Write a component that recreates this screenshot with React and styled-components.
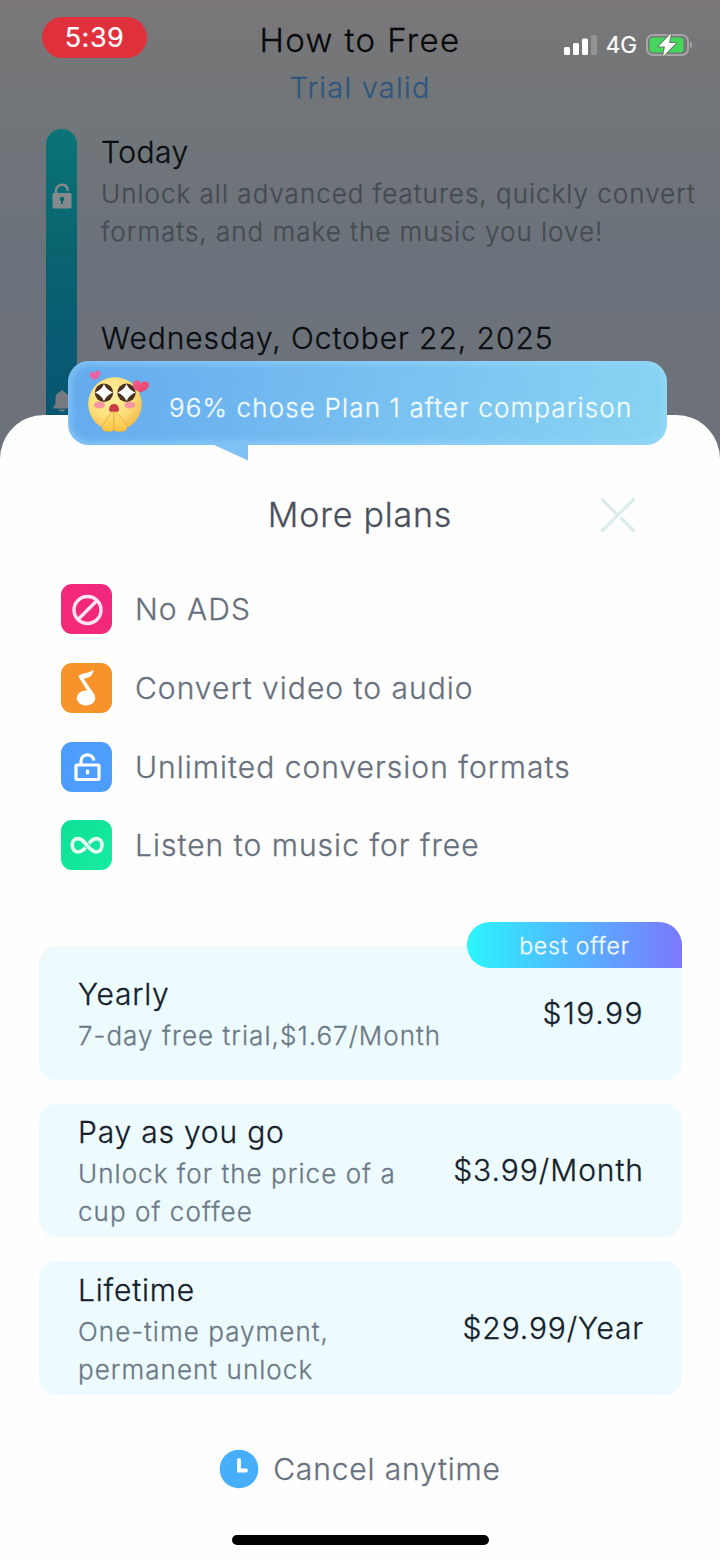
import React from 'react';
import styled, {createGlobalStyle} from 'styled-components';

const GlobalStyle = createGlobalStyle`
    * {
        box-sizing: border-box;
    }

    body {
        margin: 0;
        font-family: Inter, "Liberation Sans", sans-serif;
        font-weight: 300;
    }
`;

const Screen = styled.div`
    position: relative;
    width: 720px;
    height: 1560px;
    overflow: hidden;
    background: linear-gradient(180deg, #7a7678 0, #747678 70px, #6f7579 150px, #6c727b 260px, #6d7279 480px);
`;

const Text = styled.div`
    font-size: ${props => props.$size}px;
    line-height: ${props => props.$line || 40}px;
    letter-spacing: ${props => props.$spacing}px;
    color: ${props => props.$color};
    -webkit-text-stroke: 0.3px currentColor;
    white-space: pre;
`;

const StatusBar = styled.div`
    position: absolute;
    top: 0;
    left: 0;
    right: 0;
    display: flex;
    justify-content: space-between;
    padding: 17px 27px 0 42px;
`;

const Clock = styled.div`
    width: 105px;
    height: 41px;
    border-radius: 21px;
    background: #e0303c;
    color: #fff;
    font-size: 27px;
    font-weight: 400;
    letter-spacing: 0.5px;
    line-height: 42px;
    text-align: center;
    -webkit-text-stroke: 0.2px currentColor;
`;

const StatusIcons = styled.div`
    display: flex;
    align-items: center;
    height: 55px;
`;

const Network = styled.span`
    margin: 0 9px;
    color: #fff;
    font-size: 22.5px;
    font-weight: 400;
    -webkit-text-stroke: 0.2px currentColor;
`;

const Header = styled.header`
    display: flex;
    flex-direction: column;
    align-items: center;
    gap: 7px;
    height: 129px;
    padding-top: 20px;
`;

const Timeline = styled.div`
    display: flex;
    gap: 24px;
    padding-left: 46px;
`;

const TimelineBar = styled.div`
    display: flex;
    flex-direction: column;
    align-items: center;
    justify-content: space-between;
    width: 31px;
    height: 310px;
    padding: 53px 0 26px;
    border-radius: 16px 16px 0 0;
    background: linear-gradient(180deg, #0a7478 0, #09646f 120px, #085a72 220px, #08546f 310px);
`;

const TimelineContent = styled.div`
    display: flex;
    flex-direction: column;
    padding-top: 1px;
`;

const TimelineItem = styled.div`
    height: 187.5px;
`;

const Sheet = styled.section`
    position: absolute;
    top: 415px;
    left: 0;
    right: 0;
    bottom: 0;
    display: flex;
    flex-direction: column;
    border-radius: 44px 44px 0 0;
    background: #fefefe;
`;

const Bubble = styled.div`
    position: absolute;
    top: -54px;
    left: 68px;
    display: flex;
    align-items: center;
    width: 599px;
    height: 84px;
    padding-left: 17px;
    border-radius: 21px;
    background: linear-gradient(100deg, #63abee 0, #72b9f0 35%, #80caf2 75%, #88d4f2 100%);
    box-shadow: inset 0 0 9px 2px rgba(165, 218, 255, 0.65);
`;

const BubbleTail = styled.svg`
    position: absolute;
    top: 82px;
    left: 142px;
`;

const BubbleText = styled(Text)`
    margin: 10px 0 0 18px;
`;

const SheetHeader = styled.div`
    display: grid;
    grid-template-columns: 1fr auto 1fr;
    align-items: center;
    padding: 80px 0 0;
`;

const CloseIcon = styled.svg`
    grid-column: 3;
    justify-self: end;
    margin-right: 84px;
`;

const SheetTitle = styled(Text)`
    grid-column: 2;
`;

const Features = styled.div`
    display: flex;
    flex-direction: column;
    gap: 28.75px;
    padding: 49.1px 0 0 61px;
`;

const Feature = styled.div`
    display: flex;
    align-items: center;
    gap: 23px;
`;

const FeatureIcon = styled.svg`
    width: 51px;
    height: 50px;
    border-radius: 11px;
    background: ${props => props.$background};
`;

const Plans = styled.div`
    display: flex;
    flex-direction: column;
    gap: 24px;
    padding: 75.7px 38px 0 39px;
`;

const Plan = styled.div`
    position: relative;
    display: flex;
    align-items: center;
    justify-content: space-between;
    height: 133.6px;
    padding: 0 38px 0 39px;
    border-radius: 18px;
    background: #edfbff;
`;

const PlanInfo = styled.div`
    padding-top: 3px;
`;

const PlanTitle = styled(Text)`
    margin-bottom: 3px;
`;

const BestOffer = styled.div`
    position: absolute;
    top: -24px;
    right: 0;
    width: 215px;
    height: 46px;
    border-radius: 23px 23px 0 23px;
    background: linear-gradient(90deg, #2cf6fd 0, #48c6ff 35%, #629fff 68%, #7b79fc 100%);
    text-align: center;
`;

const Footer = styled.div`
    display: flex;
    align-items: center;
    justify-content: center;
    gap: 14px;
    margin-top: 54px;
`;

const HomeIndicator = styled.div`
    position: absolute;
    bottom: 15px;
    left: 232px;
    width: 257px;
    height: 10px;
    border-radius: 5px;
    background: #000;
`;

const SignalIcon = () => (
    <svg width="33" height="20" viewBox="0 0 33 20">
        <rect x="0" y="12" width="6" height="8" rx="1.6" fill="#fff"/>
        <rect x="9" y="8" width="6" height="12" rx="1.6" fill="#fff"/>
        <rect x="18" y="3.5" width="6" height="16.5" rx="1.6" fill="#fff"/>
        <rect x="27" y="0" width="6" height="20" rx="1.6" fill="#959394"/>
    </svg>
);

const BatteryIcon = () => (
    <svg width="47" height="24" viewBox="0 0 47 24">
        <rect x="1" y="2" width="41" height="20" rx="6" fill="none" stroke="#a5a5a5" strokeWidth="2"/>
        <rect x="3.5" y="4.5" width="34" height="15" rx="3.5" fill="#45d75c"/>
        <path d="M44 8.5C46.800 9.500 46.800 14.500 44 15.500Z" fill="#a5a5a5"/>
        <path d="M25 0.500L12.500 13.500H19L17 23.500L30 10H23Z" fill="#fff" stroke="#64806a" strokeWidth="2" paintOrder="stroke" strokeLinejoin="round"/>
    </svg>
);

const BarLockIcon = () => (
    <svg width="20" height="27" viewBox="0 0 20 27">
        <path d="M4 12V8A6 6 0 0 1 15.500 6.500V9" fill="none" stroke="#868a8d" strokeWidth="2.400"/>
        <rect x="0.500" y="11" width="19" height="15.500" rx="1.500" fill="#868a8d"/>
        <circle cx="10" cy="17" r="2.300" fill="#0a6772"/>
        <path d="M9 17H11V22H9Z" fill="#0a6772"/>
    </svg>
);

const BellIcon = () => (
    <svg width="20" height="23" viewBox="0 0 20 23">
        <path d="M8.500 1.500A1.500 1.500 0 0 1 11.500 1.500C15.500 3 16.500 6 16.500 9V14L19.500 18.500H0.500L3.500 14V9C3.500 6 4.500 3 8.500 1.500Z" fill="#777980"/>
        <path d="M6.500 19.500H13.500C13 22.300 7 22.300 6.500 19.500Z" fill="#777980"/>
    </svg>
);

const StarEyesEmoji = () => (
    <svg width="66" height="66" viewBox="0 0 66 66">
        <defs>
            <radialGradient id="face" cx="0.42" cy="0.35" r="0.7">
                <stop offset="0" stopColor="#fff0a6"/>
                <stop offset="0.6" stopColor="#fddf78"/>
                <stop offset="1" stopColor="#f2b347"/>
            </radialGradient>
            <linearGradient id="hands" x1="0" y1="0" x2="0" y2="1">
                <stop offset="0" stopColor="#ffe27c"/>
                <stop offset="1" stopColor="#f9c545"/>
            </linearGradient>
            <linearGradient id="heart" x1="0" y1="0" x2="1" y2="1">
                <stop offset="0" stopColor="#f5648e"/>
                <stop offset="1" stopColor="#e63c68"/>
            </linearGradient>
        </defs>
        <circle cx="30" cy="34" r="26.800" fill="url(#face)"/>
        <ellipse cx="14.500" cy="35" rx="5.500" ry="3.400" fill="#f796a0"/>
        <ellipse cx="45" cy="35" rx="5.500" ry="3.400" fill="#f796a0"/>
        <circle cx="19" cy="22.800" r="9.200" fill="#49301f"/>
        <circle cx="41.500" cy="22.800" r="9.200" fill="#49301f"/>
        <path d="M19 14Q21.500 20 28 22.500Q21.500 25 19 31Q16.500 25 10 22.500Q16.500 20 19 14Z" fill="#fff"/>
        <path d="M41.500 14Q44 20 50.500 22.500Q44 25 41.500 31Q39 25 32.500 22.500Q39 20 41.500 14Z" fill="#fff"/>
        <path d="M24 40C24 36 26.500 34 29 34C31.500 34 34 36 34 40C34 43 24 43 24 40Z" fill="#c93a44"/>
        <path d="M28 41.500C25 44 21 49 17.500 56C16 60 20 62 23 61C27 63 29 60 29 57V44Z" fill="url(#hands)" stroke="#eda93c" strokeWidth="0.800"/>
        <path d="M30 41.500C33 44 38 49 41.500 56C43 60 39 62 36 61C32 63 29 60 29 57V44Z" fill="url(#hands)" stroke="#eda93c" strokeWidth="0.800"/>
        <path d="M10 10C4 8 3 3 6.500 2C8 1.500 9 2.500 9.500 3.500C10 1.500 12 -0.500 14.500 1C17 3.500 14 8 10 10Z" fill="#e763a5"/>
        <path d="M56 22.500C47 20 46 13 50 10.800C52.500 9.500 55 11 55.500 13.500C57.500 10.500 63 10.500 64 14C64.500 18 60 21 56 22.500Z" fill="url(#heart)"/>
    </svg>
);

const ClockIcon = () => (
    <svg width="40" height="40" viewBox="0 0 40 40">
        <circle cx="20" cy="20" r="19.300" fill="#47affa"/>
        <path d="M20 11V21.500H27" fill="none" stroke="#fff" strokeWidth="3.800" strokeLinecap="round"/>
    </svg>
);

const features = [
    {
        title: 'No ADS',
        background: 'linear-gradient(45deg, #f52a76, #f0267e)',
        icon: <g fill="none" stroke="#ffe6f2" strokeWidth="3.400">
            <circle cx="26.500" cy="26" r="13.500"/>
            <path d="M17 35.500L36 16.500"/>
        </g>
    },
    {
        title: 'Convert video to audio',
        background: '#f7932a',
        icon: <g fill="#fff">
            <ellipse cx="25" cy="35" rx="9.300" ry="7.500"/>
            <path d="M17.500 13.500C20 9 29 11 32.500 6.500C32.500 13 27 15.500 22.500 15.500L33.500 31.500L30 34Z"/>
        </g>
    },
    {
        title: 'Unlimited conversion formats',
        background: '#4d9dfc',
        icon: <g fill="none" stroke="#fff" strokeWidth="3.200">
            <rect x="15" y="23" width="23" height="14.500" rx="0.800"/>
            <path d="M20 23V19.500C20 11 31.500 10.500 33 18.500"/>
            <rect x="24.800" y="27.500" width="3.500" height="5" rx="1.500" fill="#fff" stroke="none"/>
        </g>
    },
    {
        title: 'Listen to music for free',
        background: 'linear-gradient(135deg, #0fdf94, #16eda2)',
        icon: <path d="M28 23.500C30.500 20.500 32.500 18.700 35.500 18.700C39 18.700 41 21.500 41 25C41 28.500 39 32 35.500 32C32.500 32 31 30.500 28.500 28L23.500 22.500C21.500 20 19.500 18.700 17 18.700C13.500 18.700 11.200 21.500 11.200 25C11.200 28.500 13.500 32 17 32C20 32 22 30.500 24.500 27.500" fill="none" stroke="#e4fff3" strokeWidth="3.700"/>
    }
];

const plans = [
    {title: 'Yearly', detail: '7-day free trial,$1.67/Month', price: '$19.99', priceSpacing: 1.5, best: true},
    {title: 'Pay as you go', detail: 'Unlock for the price of a\ncup of coffee', price: '$3.99/Month', priceSpacing: 0.95},
    {title: 'Lifetime', detail: 'One-time payment,\npermanent unlock', price: '$29.99/Year', priceSpacing: 0.85}
];

const App = () => {
    let featureItems = features.map(feature => {
        return <Feature key={feature.title}>
            <FeatureIcon viewBox="0 0 51 50" $background={feature.background}>{feature.icon}</FeatureIcon>
            <Text $size={30} $spacing={1.02} $color="#68707d">{feature.title}</Text>
        </Feature>
    });
    let planItems = plans.map(plan => {
        return <Plan key={plan.title}>
            <PlanInfo>
                <PlanTitle $size={30} $spacing={0.8} $color="#14202a">{plan.title}</PlanTitle>
                <Text $size={26} $line={38.5} $spacing={1.05} $color="#6b7986">{plan.detail}</Text>
            </PlanInfo>
            <Text $size={30} $spacing={plan.priceSpacing} $color="#14202a">{plan.price}</Text>
            {plan.best && <BestOffer>
                <Text $size={23} $line={48} $spacing={0.85} $color="#f0fbff">best offer</Text>
            </BestOffer>}
        </Plan>
    });
    return (
        <Screen>
            <GlobalStyle/>
            <Header>
                <Text $size={33} $line={41} $spacing={1.4} $color="#08090b">How to Free</Text>
                <Text $size={29} $spacing={1.2} $color="#2e5680">Trial valid</Text>
            </Header>
            <Timeline>
                <TimelineBar>
                    <BarLockIcon/>
                    <BellIcon/>
                </TimelineBar>
                <TimelineContent>
                    <TimelineItem>
                        <Text $size={30} $line={45} $spacing={0.5} $color="#0a0d10">Today</Text>
                        <Text $size={26} $line={38.4} $spacing={1.01} $color="#454b52">{'Unlock all advanced features, quickly convert\nformats, and make the music you love!'}</Text>
                    </TimelineItem>
                    <Text $size={30} $spacing={0.93} $color="#0a0d10">Wednesday, October 22, 2025</Text>
                </TimelineContent>
            </Timeline>
            <StatusBar>
                <Clock>5:39</Clock>
                <StatusIcons>
                    <SignalIcon/>
                    <Network>4G</Network>
                    <BatteryIcon/>
                </StatusIcons>
            </StatusBar>
            <Sheet>
                <SheetHeader>
                    <SheetTitle $size={34} $spacing={0.8} $color="#4a505b">More plans</SheetTitle>
                    <CloseIcon width="36" height="36" viewBox="0 0 36 36">
                        <path d="M1.500 1.500L17 17.500M20.500 20.500L34.500 34.500M34.500 1.500L1.500 34.500" fill="none" stroke="#dcebee" strokeWidth="3.200"/>
                    </CloseIcon>
                </SheetHeader>
                <Features>{featureItems}</Features>
                <Plans>{planItems}</Plans>
                <Footer>
                    <ClockIcon/>
                    <Text $size={30} $spacing={0.85} $color="#68707d">Cancel anytime</Text>
                </Footer>
                <HomeIndicator/>
                <Bubble>
                    <StarEyesEmoji/>
                    <BubbleText $size={26} $spacing={1.15} $color="#f2fbff">96% chose Plan 1 after comparison</BubbleText>
                    <BubbleTail width="40" height="18" viewBox="0 0 40 18">
                        <path d="M0 0L38 17.500V0Z" fill="#7fc0f5"/>
                    </BubbleTail>
                </Bubble>
            </Sheet>
        </Screen>
    );
};

export default App;
